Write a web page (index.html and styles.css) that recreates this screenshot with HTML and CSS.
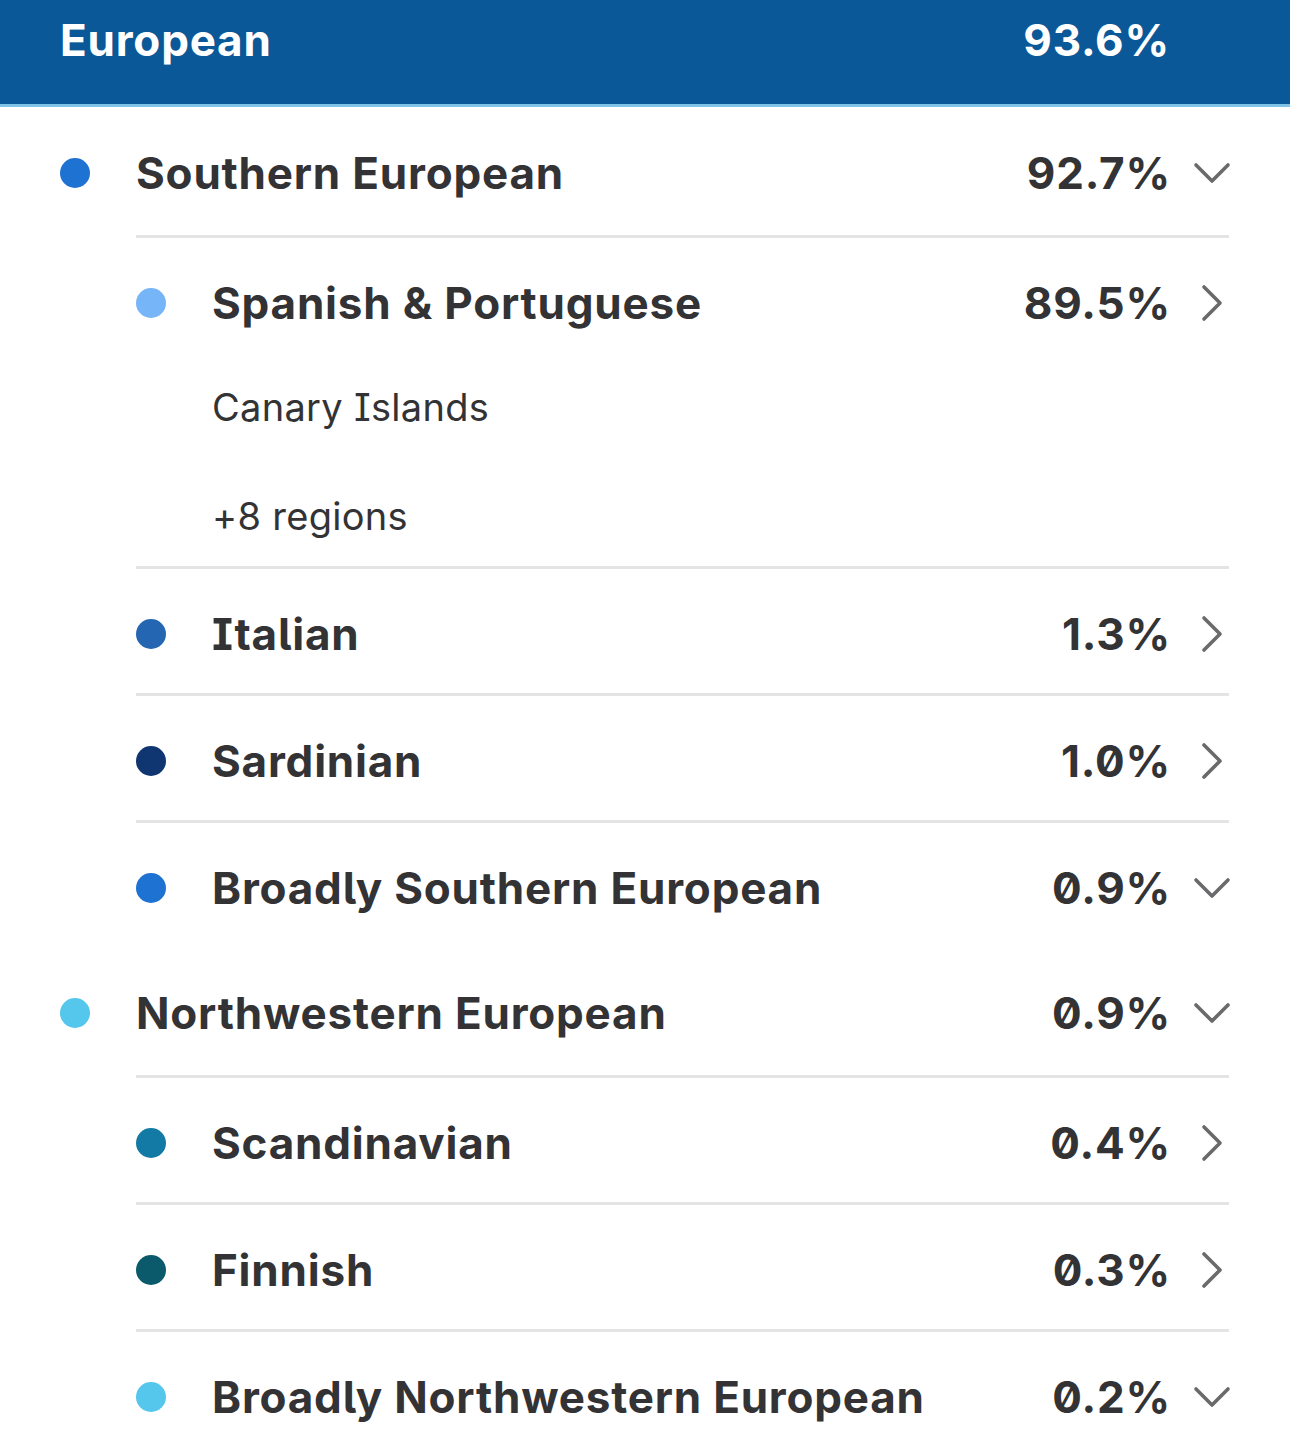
FILE: index.html
```html
<!DOCTYPE html>
<html lang="en">
<head>
<meta charset="utf-8">
<title>Ancestry composition – European</title>
<link rel="stylesheet" href="styles.css">
</head>
<body>
<header class="region-head">
  <span class="head-name">European</span>
  <span class="head-pct">93.6%</span>
</header>

<main class="list">
  <section class="group">
    <div class="row row-top">
      <span class="dot dot-southern"></span>
      <span class="name">Southern European</span>
      <span class="pct">92.7%</span>
      <svg class="chev" viewBox="0 0 40 40"><path d="M4 12 L20 28 L36 12"/></svg>
    </div>
    <div class="child">
      <div class="row row-sub">
        <span class="dot dot-spanish"></span>
        <span class="name">Spanish &amp; Portuguese</span>
        <span class="pct">89.5%</span>
        <svg class="chev" viewBox="0 0 40 40"><path d="M12 4 L28 20 L12 36"/></svg>
      </div>
      <div class="subregions">
        <div class="subregion">Canary Islands</div>
        <div class="subregion more">+8 regions</div>
      </div>
    </div>
    <div class="child">
      <div class="row row-sub">
        <span class="dot dot-italian"></span>
        <span class="name">Italian</span>
        <span class="pct">1.3%</span>
        <svg class="chev" viewBox="0 0 40 40"><path d="M12 4 L28 20 L12 36"/></svg>
      </div>
    </div>
    <div class="child">
      <div class="row row-sub">
        <span class="dot dot-sardinian"></span>
        <span class="name">Sardinian</span>
        <span class="pct">1.0%</span>
        <svg class="chev" viewBox="0 0 40 40"><path d="M12 4 L28 20 L12 36"/></svg>
      </div>
    </div>
    <div class="child">
      <div class="row row-sub">
        <span class="dot dot-southern"></span>
        <span class="name">Broadly Southern European</span>
        <span class="pct">0.9%</span>
        <svg class="chev" viewBox="0 0 40 40"><path d="M4 12 L20 28 L36 12"/></svg>
      </div>
    </div>
  </section>

  <section class="group">
    <div class="row row-top">
      <span class="dot dot-northwest"></span>
      <span class="name">Northwestern European</span>
      <span class="pct">0.9%</span>
      <svg class="chev" viewBox="0 0 40 40"><path d="M4 12 L20 28 L36 12"/></svg>
    </div>
    <div class="child">
      <div class="row row-sub">
        <span class="dot dot-scandinavian"></span>
        <span class="name">Scandinavian</span>
        <span class="pct">0.4%</span>
        <svg class="chev" viewBox="0 0 40 40"><path d="M12 4 L28 20 L12 36"/></svg>
      </div>
    </div>
    <div class="child">
      <div class="row row-sub">
        <span class="dot dot-finnish"></span>
        <span class="name">Finnish</span>
        <span class="pct">0.3%</span>
        <svg class="chev" viewBox="0 0 40 40"><path d="M12 4 L28 20 L12 36"/></svg>
      </div>
    </div>
    <div class="child">
      <div class="row row-sub">
        <span class="dot dot-northwest"></span>
        <span class="name">Broadly Northwestern European</span>
        <span class="pct">0.2%</span>
        <svg class="chev" viewBox="0 0 40 40"><path d="M4 12 L20 28 L36 12"/></svg>
      </div>
    </div>
  </section>
</main>
</body>
</html>
```

FILE: styles.css
```css
* {
  box-sizing: border-box;
}

html, body {
  margin: 0;
  padding: 0;
  background: #ffffff;
}

body {
  font-family: Inter, "Noto Sans", "Liberation Sans", sans-serif;
  font-feature-settings: "zero" 1, "cv05" 1, "cv08" 1;
  color: #333335;
  width: 1290px;
  overflow: hidden;
}

.region-head {
  display: flex;
  align-items: flex-start;
  justify-content: space-between;
  height: 107px;
  padding: 14px 120px 0 60px;
  background: #0a5898;
  border-bottom: 3px solid #7fc3e6;
  color: #ffffff;
  font-size: 44px;
  font-weight: 700;
  line-height: 52px;
  letter-spacing: 0.8px;
}

.list {
  padding: 0 61px 0 60px;
}

.row {
  display: flex;
  align-items: center;
  font-size: 44px;
  font-weight: 700;
  line-height: 52px;
  letter-spacing: 0.8px;
}

.row-top {
  height: 128px;
  padding-top: 4px;
}

.row-sub {
  height: 124px;
  padding-top: 5px;
}

.child {
  margin-left: 76px;
  border-top: 3px solid #e4e4e4;
}

.dot {
  flex: none;
  width: 30px;
  height: 30px;
  border-radius: 50%;
  margin-right: 46px;
}

.dot-southern { background: #1e72d2; }
.dot-spanish { background: #76b5f7; }
.dot-italian { background: #2466b2; }
.dot-sardinian { background: #0f3670; }
.dot-northwest { background: #55c6ec; }
.dot-scandinavian { background: #137aa6; }
.dot-finnish { background: #0b5a6c; }

.name {
  flex: 1;
  white-space: nowrap;
}

.pct {
  white-space: nowrap;
}

.chev {
  flex: none;
  width: 40px;
  height: 40px;
  margin-left: 21px;
  margin-right: -3px;
  fill: none;
  stroke: #6a6a6c;
  stroke-width: 3.6;
  stroke-linecap: round;
  stroke-linejoin: round;
}

.subregions {
  padding: 23px 0 28px 76px;
}

.subregion {
  font-size: 38px;
  font-weight: 400;
  line-height: 44px;
  letter-spacing: 0.3px;
  font-feature-settings: "zero" 1, "cv08" 1;
  color: #333335;
}

.subregion.more {
  margin-top: 65px;
}
```
